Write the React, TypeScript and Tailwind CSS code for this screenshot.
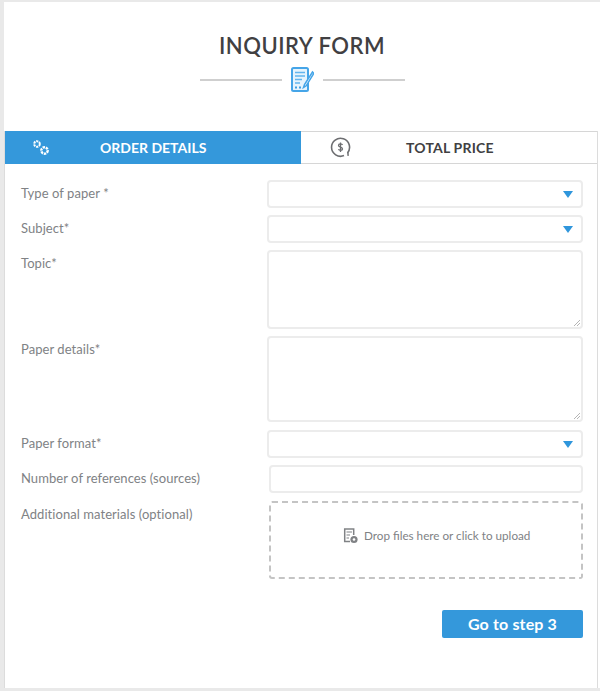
import React from 'react';

const labelClass = 'text-[13px] leading-[18px] tracking-[0.06px] text-[#808285]';
const boxClass = 'border-2 border-[#ececec] rounded-[4px] bg-white';

const Arrow = () => (
  <svg className="h-[7px] w-[10px]" viewBox="0 0 10 7">
    <path d="M0 0h10L5 7z" fill="#2f96dc" />
  </svg>
);

const Gears = () => (
  <svg className="h-[18px] w-[18px]" viewBox="0 0 18 18" fill="none" stroke="#fff">
    <circle cx="5" cy="5" r="2.8" strokeWidth="2" strokeDasharray="2.2 0.8" />
    <circle cx="12.5" cy="11.5" r="3.2" strokeWidth="2.4" strokeDasharray="2.4 0.8" />
  </svg>
);

const PriceIcon = () => (
  <svg className="h-[21px] w-[21px]" viewBox="0 0 21 21" fill="none" stroke="#6d6e71">
    <path d="M14 18.600A9 9 0 1 1 17.500 16" strokeWidth="1.600" />
    <path d="M17.800 15.500l.4 3.300" strokeWidth="1.500" />
    <path d="M12.500 8c-.5-1.600-4-1.600-4 .4 0 2 4 1.500 4 3.500 0 1.900-3.500 1.900-4 .2M10.500 5.500v9.500" strokeWidth="1.300" />
  </svg>
);

const FormIcon = () => (
  <svg className="h-[25px] w-[23px]" viewBox="0 0 23 25" fill="none">
    <rect x="1" y="1" width="16" height="23" rx="1.500" stroke="#45a5e8" strokeWidth="2" fill="#e6f4fd" />
    <path d="M4 5.500h10M4 9h10M4 12.500h7M4 16h5" stroke="#62b5ee" strokeWidth="1.600" />
    <path d="M4 20.500h2M8 20.500h2" stroke="#3d9fe3" strokeWidth="1.800" />
    <path d="M21.500 5 13.500 17.500l-1 3 2.700-1.700L22.800 6.500z" fill="#ffffff" stroke="#45a5e8" strokeWidth="1.500" />
  </svg>
);

const FileIcon = () => (
  <svg className="h-[16px] w-[16px]" viewBox="0 0 16 16" fill="none">
    <path d="M7 13.500H1.700V1h9v6" stroke="#808285" strokeWidth="1.500" />
    <path d="M3.500 4h5.500M3.500 7h3.500M3.500 10h2.500" stroke="#808285" strokeWidth="1.200" />
    <circle cx="11" cy="11.500" r="3.600" fill="#808285" />
    <circle cx="11" cy="11.500" r="1.300" fill="#fff" />
  </svg>
);

const FormRow = ({ label, children, className }: { label: string; children: React.ReactNode; className: string }) => (
  <div className={`flex ${className}`}>
    <div className={`w-[246px] shrink-0 pt-[4px] ${labelClass}`}>{label}</div>
    {children}
  </div>
);

const SelectBox = () => (
  <div className={`flex h-[28px] w-[316px] items-center justify-end pr-[8px] ${boxClass}`}>
    <Arrow />
  </div>
);

const TextBox = ({ height }: { height: string }) => (
  <div className={`relative w-[316px] ${height} ${boxClass}`}>
    <svg className="absolute bottom-[1px] right-[1px] h-[7px] w-[7px]" viewBox="0 0 7 7" stroke="#b5b5b5">
      <path d="M1 7 7 1M4 7l3-3" />
    </svg>
  </div>
);

export default function App() {
  return (
    <div className="flex h-[691px] w-[600px] flex-col overflow-hidden bg-[#e9e9e9] pb-[3px] pl-[4px] pt-[2px] font-['Lato',sans-serif]">
      <div className="flex flex-1 flex-col bg-white">
        <div className="flex h-[129px] shrink-0 flex-col items-center pt-[31px]">
          <h1 className="text-[22px] font-semibold leading-[26px] tracking-[0.5px] text-[#414042]">INQUIRY FORM</h1>
          <div className="mt-[8px] flex items-center gap-[9px]">
            <div className="h-[2px] w-[82px] bg-[#cfcfcf]" />
            <FormIcon />
            <div className="h-[2px] w-[82px] bg-[#cfcfcf]" />
          </div>
        </div>

        <div className="mr-[2px] flex-1 border-x border-[#dcdcdc]">
          <div className="flex h-[33px] border-y border-[#d6d6d6]">
            <div className="-mt-px flex h-[33px] w-[296px] items-center bg-[#3498db] pl-[27px] text-[14px] font-bold text-white">
              <Gears />
              <span className="ml-[50px]">ORDER DETAILS</span>
            </div>
            <div className="flex flex-1 items-center pl-[29px] text-[14px] font-bold tracking-[0.2px] text-[#414042]">
              <PriceIcon />
              <span className="ml-[55px]">TOTAL PRICE</span>
            </div>
          </div>

          <div className="pl-[16px] pr-[14px] pt-[16px]">
            <FormRow label="Type of paper *" className="mb-[7px]"><SelectBox /></FormRow>
            <FormRow label="Subject*" className="mb-[7px]"><SelectBox /></FormRow>
            <FormRow label="Topic*" className="mb-[7px]"><TextBox height="h-[79px]" /></FormRow>
            <FormRow label="Paper details*" className="mb-[8px]"><TextBox height="h-[86px]" /></FormRow>
            <FormRow label="Paper format*" className="mb-[7px]"><SelectBox /></FormRow>
            <FormRow label="Number of references (sources)" className="mb-[8px]">
              <div className={`ml-[2px] h-[28px] w-[314px] ${boxClass}`} />
            </FormRow>
            <FormRow label="Additional materials (optional)" className="mb-[31px]">
              <div className="ml-[2px] flex h-[78px] w-[314px] items-center rounded-[3px] border-2 border-dashed border-[#c4c4c4] pb-[8px] pl-[72px] text-[11.7px] text-[#808285]">
                <FileIcon />
                <span className="ml-[5px]">Drop files here or click to upload</span>
              </div>
            </FormRow>
            <div className="flex justify-end">
              <button className="h-[28px] w-[141px] rounded-[2px] bg-[#3498db] text-[16px] font-bold tracking-[0.15px] text-white">Go to step 3</button>
            </div>
          </div>
        </div>
      </div>
    </div>
  );
}
